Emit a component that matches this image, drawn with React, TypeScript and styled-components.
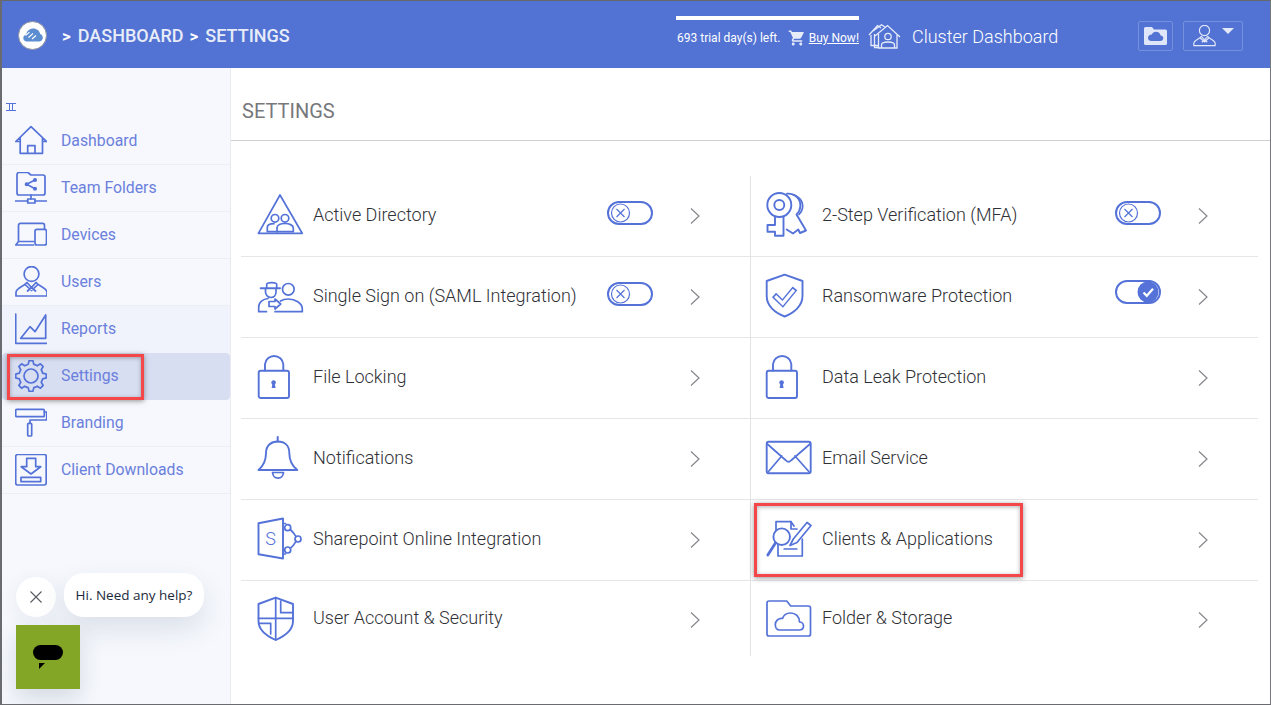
import React from 'react';
import styled, { createGlobalStyle } from 'styled-components';
import { MdShoppingCart } from 'react-icons/md';

const BLUE = '#5472d8';

const GlobalStyle = createGlobalStyle`
  html, body {
    margin: 0;
    padding: 0;
    background: #fff;
    overflow: hidden;
  }
  * { box-sizing: border-box; }
`;

const Page = styled.div`
  width: 1271px;
  height: 705px;
  display: flex;
  flex-direction: column;
  border-top: 1px solid #66676b;
  border-left: 2px solid #6a6b70;
  border-right: 1px solid #77787c;
  border-bottom: 1px solid #6a6b70;
  margin-bottom: 1px;
  font-family: Roboto, 'Liberation Sans', sans-serif;
  background: #fff;
  overflow: hidden;
`;

const Header = styled.header`
  height: 67px;
  flex: none;
  display: flex;
  align-items: center;
  background: #5273d3;
  color: #fff;
  padding-left: 16px;
`;

const LogoBadge = styled.div`
  width: 29px;
  height: 29px;
  border-radius: 50%;
  background: #fff;
  border: 1px solid #8a8f9c;
  display: flex;
  align-items: center;
  justify-content: center;
  margin-right: 15px;
  margin-top: 1px;
`;

const Crumbs = styled.div`
  display: flex;
  align-items: center;
  font-size: 18px;
  font-weight: 500;
  color: #e8ecf8;
  width: 614px;
  margin-top: 1px;
`;

const Crumb = styled.span`
  margin-right: 6px;
  b {
    font-weight: 700;
    font-size: 17px;
    color: #fff;
    margin-right: 7px;
  }
`;

const Trial = styled.div`
  width: 183px;
  height: 47px;
  align-self: flex-start;
  margin-top: 15px;
  border-top: 4px solid #fff;
  display: flex;
  align-items: center;
  justify-content: space-between;
  font-size: 12px;
  font-weight: 400;
  white-space: nowrap;
  padding-bottom: 7px;
  padding-left: 1px;
`;

const CartIcon = styled(MdShoppingCart)`
  width: 18px;
  height: 18px;
  color: #e6ebfa;
  margin-left: 7px;
  margin-right: 3px;
  flex: none;
`;

const BuyNow = styled.a`
  color: #fff;
  text-decoration: underline;
`;

const ClusterLink = styled.div`
  display: flex;
  align-items: center;
  margin-left: 9px;
  width: 270px;
  gap: 11px;
  font-size: 18px;
  font-weight: 300;
  color: #fff;
  margin-top: 3px;
`;

const HeaderButton = styled.button<{ $wide?: boolean }>`
  height: 30px;
  width: ${(p) => (p.$wide ? '60px' : '35px')};
  margin-right: 10px;
  margin-top: 2px;
  padding: 0;
  background: transparent;
  border: 1px solid rgba(255, 255, 255, 0.2);
  border-radius: 2px;
  display: flex;
  align-items: center;
  justify-content: center;
  gap: 6px;
`;

const Caret = styled.span`
  width: 0;
  height: 0;
  border-left: 6px solid transparent;
  border-right: 6px solid transparent;
  border-top: 6px solid #e4e9f9;
  margin-top: -9px;
`;

const Body = styled.div`
  flex: 1;
  display: flex;
  min-height: 0;
`;

const Sidebar = styled.aside`
  position: relative;
  width: 229px;
  flex: none;
  background: #f6f8fd;
  border-right: 1px solid #e9ebf1;
  padding-top: 35px;
`;

const CollapseIcon = styled.svg`
  display: block;
  margin-left: 4px;
  margin-bottom: 7px;
`;

const NavItem = styled.a<{ $state?: 'soft' | 'active' }>`
  position: relative;
  height: 47px;
  display: flex;
  align-items: center;
  padding-left: 13px;
  border-bottom: 1px solid ${(p) => (p.$state ? 'transparent' : '#eceef4')};
  border-radius: ${(p) => (p.$state === 'active' ? '4px' : '0')};
  background: ${(p) =>
    p.$state === 'active' ? '#d8def2' : p.$state === 'soft' ? '#f0f3fb' : 'transparent'};
  color: #6b7fdc;
  font-size: 15.8px;
  gap: 14px;
  svg { flex: none; }
`;

const NavText = styled.span`
  margin-bottom: 2px;
`;

const Callout = styled.span`
  position: absolute;
  border: 3px solid #f4474a;
  box-shadow: 0 1px 5px rgba(60, 60, 60, 0.55), inset 0 1px 4px rgba(60, 60, 60, 0.4);
  pointer-events: none;
`;

const SettingsCallout = styled(Callout)`
  left: 5px;
  top: 1px;
  width: 137px;
  height: 46px;
`;

const ClientsCallout = styled(Callout)`
  left: 3px;
  top: 3px;
  width: 269px;
  height: 74px;
`;

const ChatDock = styled.div`
  position: absolute;
  left: 14px;
  top: 505px;
  display: grid;
  grid-template-columns: 40px auto;
  column-gap: 8px;
  row-gap: 8px;
  align-items: end;
`;

const ChatClose = styled.div`
  width: 40px;
  height: 40px;
  border-radius: 50%;
  background: #fff;
  display: flex;
  align-items: center;
  justify-content: center;
  box-shadow: 0 4px 20px rgba(40, 60, 90, 0.08);
`;

const ChatBubble = styled.div`
  height: 44px;
  width: 140px;
  border-radius: 20px;
  background: #fff;
  display: flex;
  align-items: center;
  justify-content: center;
  font-family: 'Open Sans', sans-serif;
  font-size: 13.5px;
  color: #1b2a3b;
  white-space: nowrap;
  box-shadow: 0 12px 28px rgba(40, 60, 90, 0.13);
`;

const ChatButton = styled.div`
  width: 64px;
  height: 64px;
  background: #84a627;
  display: flex;
  align-items: center;
  justify-content: center;
  box-shadow: 0 10px 24px rgba(40, 60, 90, 0.16);
`;

const Main = styled.main`
  flex: 1;
  min-width: 0;
`;

const TitleBar = styled.div`
  height: 73px;
  display: flex;
  align-items: center;
  padding: 13px 0 0 11px;
  border-bottom: 1px solid #cfcfd2;
  font-size: 20px;
  color: #77787c;
`;

const Grid = styled.div`
  display: grid;
  grid-template-columns: 510px 507px;
  margin: 35px 0 0 10px;
`;

const Column = styled.div<{ $right?: boolean }>`
  border-right: ${(p) => (p.$right ? 'none' : '1px solid #e3e3e6')};
`;

const Row = styled.div<{ $right?: boolean; $last?: boolean }>`
  position: relative;
  height: ${(p) => (p.$last ? '75px' : '81px')};
  display: flex;
  align-items: center;
  padding: 0 50px ${(p) => (p.$last ? '0' : '2px')} ${(p) => (p.$right ? '15px' : '17px')};
  border-bottom: ${(p) => (p.$last ? 'none' : '1px solid #e6e6e8')};
`;

const IconSlot = styled.div<{ $right?: boolean }>`
  flex: none;
  width: ${(p) => (p.$right ? '56px' : '55px')};
  height: 44px;
  svg { display: block; overflow: visible; }
`;

const Label = styled.span`
  flex: 1;
  font-size: 18px;
  font-weight: 300;
  color: #2f3136;
  white-space: nowrap;
  margin-bottom: 2px;
`;

const Toggle = styled.span<{ $on?: boolean }>`
  flex: none;
  width: 46px;
  height: 24px;
  margin-right: 37px;
  border: 2px solid ${BLUE};
  border-radius: 12px;
  display: flex;
  align-items: center;
  justify-content: ${(p) => (p.$on ? 'flex-end' : 'flex-start')};
  transform: translateY(${(p) => (p.$on ? '-4px' : '-2px')});
  background: #fff;
  svg { flex: none; }
`;

const ChevronIcon = styled.svg`
  flex: none;
  transform: translateY(1px);
`;

const Stroke = styled.g`
  fill: none;
  stroke: ${BLUE};
  stroke-width: 1.7;
  stroke-linejoin: round;
  stroke-linecap: round;
`;

const Glyph = ({ w = 44, h = 44, children }: { w?: number; h?: number; children: React.ReactNode }) => (
  <svg width={w} height={h} viewBox={`0 0 ${w} ${h}`} fill="none">
    <Stroke>{children}</Stroke>
  </svg>
);

const gearPath = (cx: number, cy: number, outer: number, inner: number, teeth: number) => {
  let d = '';
  const step = (Math.PI * 2) / teeth;
  for (let i = 0; i < teeth; i++) {
    const a = i * step - Math.PI / 2;
    const pts = [
      [inner, a - step * 0.3],
      [outer, a - step * 0.16],
      [outer, a + step * 0.16],
      [inner, a + step * 0.3],
    ];
    pts.forEach(([r, t], j) => {
      const x = (cx + r * Math.cos(t)).toFixed(2);
      const y = (cy + r * Math.sin(t)).toFixed(2);
      if (i === 0 && j === 0) d += `M${x} ${y}`;
      else if (j === 0) d += `A${inner} ${inner} 0 0 1 ${x} ${y}`;
      else d += `L${x} ${y}`;
    });
  }
  return d + 'Z';
};

const HomeIcon = () => (
  <Glyph w={32} h={32}>
    <path d="M0.8 16.5L16 1.7L31.5 16.5M5.2 12.5V28.3H27.5V12.5M12.7 28.3V20.7H20V28.3M0.8 16.5H5M27.5 16.5H31.5" />
  </Glyph>
);

const TeamFolderIcon = () => (
  <Glyph w={32} h={32}>
    <path d="M2 2.5A2 2 0 0 1 4 0.5H13L16 3H28A2 2 0 0 1 30 5V21A2 2 0 0 1 28 23H4A2 2 0 0 1 2 21Z" />
    <path d="M20 8L11.7 12.3L20 16.7" strokeWidth={1.6} />
    <circle cx={20} cy={8} r={1.2} fill={BLUE} />
    <circle cx={11.7} cy={12.3} r={1.2} fill={BLUE} />
    <circle cx={20} cy={16.7} r={1.2} fill={BLUE} />
    <path d="M16 23V27M0.5 29H12.7M20 29H31.5" />
    <rect x={12.7} y={27} width={7.3} height={4} />
  </Glyph>
);

const DevicesIcon = () => (
  <Glyph w={32} h={32}>
    <path d="M3.5 22.5V6.3A2 2 0 0 1 5.5 4.3H27.5A2 2 0 0 1 29.5 6.3V10M3.5 22.5H18.5M3.5 22.5L0.8 26H18.5" />
    <rect x={20} y={10.3} width={11.5} height={15.7} rx={2} />
  </Glyph>
);

const UserShape = () => (
  <>
    <circle cx={16.5} cy={8} r={7.4} />
    <path d="M1 30V26.5C1 22 9 20.5 12 16.5L16.5 21.5L21 16.5C24 20.5 32 22 32 26.5V30Z" />
    <path d="M10 18.5L16.5 24.5L23 18.5M16.5 21.5L12.5 25M16.5 21.5L20.5 25" />
  </>
);

const UsersIcon = () => (
  <Glyph w={32} h={32}>
    <UserShape />
  </Glyph>
);

const ReportsIcon = () => (
  <Glyph w={32} h={32}>
    <path d="M0.7 1V30.3H31.7" />
    <path d="M5.7 25.3L15 13.7L20 18.7L30.7 2V25.3Z" />
  </Glyph>
);

const GearIcon = () => (
  <Glyph w={32} h={32}>
    <path d={gearPath(16, 16, 15.4, 12, 8)} />
    <circle cx={16} cy={16} r={7} />
  </Glyph>
);

const RollerIcon = () => (
  <Glyph w={32} h={32}>
    <rect x={0.7} y={2.3} width={28.6} height={7.4} rx={1} />
    <path d="M29.3 5H31.7V13H15V16.3" />
    <rect x={12.7} y={16.3} width={4} height={12.7} rx={1} />
  </Glyph>
);

const DownloadIcon = () => (
  <Glyph w={32} h={32}>
    <rect x={0.7} y={0.5} width={30.5} height={30.5} rx={2} />
    <path d="M11.7 4.3H20.7V12.7H25.7L16 20L6.2 12.7H11.7Z" />
    <rect x={6} y={23.3} width={19.7} height={4.4} />
  </Glyph>
);

const DirectoryIcon = () => (
  <Glyph>
    <path d="M22 2L44.2 40.3H0.4Z" />
    <circle cx={17} cy={25.3} r={3.8} />
    <circle cx={27} cy={25.3} r={3.8} />
    <path d="M19 38.7V35C19 32 23 30.5 27 30.5C31 30.5 35.3 32 35.3 35V38.7Z" />
    <path d="M9.3 38.7V34.5C9.3 32 12.5 30.7 16 30.7M9.3 38.7H19" />
  </Glyph>
);

const SsoIcon = () => (
  <Glyph>
    <path d="M2.7 14.3H22" strokeWidth={2} />
    <path d="M8.7 14V10.5C8.7 9 10 8.7 13.7 8.7C17.5 8.7 18.7 9 18.7 10.5V14" />
    <path d="M7.5 15V18C7.5 21 10 23.5 13 23.5C16 23.5 18 21 18 18V15" />
    <circle cx={30.3} cy={15.3} r={5.8} />
    <path d="M17 37.7H44.3V35C44.3 29 37 25 30.3 25C27 25 24.5 25.7 22.5 27" />
    <path d="M0.7 37.7V33C0.7 28 5 25 10 24.5M0.7 37.7H8.5" />
    <path d="M11 27.5H17V25L22.7 30L17 35V32.5H11Z" />
  </Glyph>
);

const LockIcon = () => (
  <Glyph w={32}>
    <rect x={0.7} y={15.7} width={30.3} height={27.3} rx={2} strokeWidth={1.9} />
    <path d="M7 15.5V9A9.2 9 0 0 1 25.3 9V15.5" strokeWidth={1.9} />
    <circle cx={15.6} cy={27.6} r={2.3} fill={BLUE} stroke="none" />
    <path d="M14.6 28L13.6 33H17.6L16.6 28Z" fill={BLUE} stroke="none" />
  </Glyph>
);

const BellIcon = () => (
  <Glyph>
    <path d="M0.5 34C7 28.5 8 22 8 17C8 9.5 13 5.5 19.7 5.5C26.5 5.5 31.3 9.5 31.3 17C31.3 22 32.3 28.5 39.3 34Z" strokeWidth={1.9} />
    <path d="M19.7 5.5V1" strokeWidth={2} />
    <path d="M14.5 36.5C15.5 44 24.5 44 25.5 36.5Z" />
  </Glyph>
);

const SharepointIcon = () => (
  <Glyph>
    <path d="M0.5 6.3L25 1.5V41.5L0.5 37.3Z" strokeWidth={1.9} />
    <text x={12.5} y={28} fontFamily="Roboto, sans-serif" fontSize={18} fontWeight={300} fill={BLUE} stroke="none" textAnchor="middle">
      S
    </text>
    <circle cx={29.7} cy={10.7} r={3} />
    <circle cx={40} cy={22} r={3} />
    <circle cx={29.7} cy={33} r={3} />
    <path d="M32.3 12.5C34.5 14.5 36.5 17 38 19.7M38 24.3C36.5 27 34.5 29.5 32.3 31.3M25 6.5H27.5M25 37H27.5" />
  </Glyph>
);

const SecurityShieldIcon = () => (
  <Glyph>
    <path d="M17.7 0.7L35 7V24C35 33 27 39 17.7 43C8.5 39 0.5 33 0.5 24V7Z" strokeWidth={1.9} />
    <path d="M17.7 0.7V43M0.5 21.3H35" />
    <path d="M22.7 4V15.7H35M1 26.3H12.7V37" />
  </Glyph>
);

const KeysIcon = () => (
  <Glyph>
    <circle cx={13.3} cy={12} r={12} strokeWidth={1.9} />
    <circle cx={13.3} cy={12} r={5} strokeWidth={1.9} />
    <path d="M9 23.5V32H1.5V38.7H9V42.7H17.5V23.5" strokeWidth={1.9} />
    <path d="M21 0.7C29 0.2 35 6 34.3 13.5C34 17 32.5 19.8 30.5 21.5L40 37.5L34 40L32.3 36.5L27 40.5L20.7 36.5" strokeWidth={1.9} />
    <path d="M26.5 1.5C33 3 37.5 8.5 36.5 15C36 18 34.5 20 33 21.5" />
  </Glyph>
);

const CheckShieldIcon = () => (
  <Glyph>
    <path d="M18.7 0.7L36.5 7V22C36.5 32 28 39 18.7 42.5C9 39 0.7 32 0.7 22V7Z" strokeWidth={1.9} />
    <path d="M8 21L16.7 29.3L29 14.3" strokeWidth={6} strokeLinejoin="miter" strokeLinecap="butt" />
    <path d="M9.2 22.2L16.7 29.3L27.9 15.7" strokeWidth={3.2} stroke="#fff" strokeLinejoin="miter" strokeLinecap="butt" />
  </Glyph>
);

const MailIcon = () => (
  <Glyph>
    <rect x={0.7} y={5.7} width={44} height={31.6} rx={2} strokeWidth={1.9} />
    <path d="M1.3 8L20 24.5C21.5 26 23.5 26 25 24.5L44 8M2.3 35.7L15.7 20M43 35.7L29 20" />
  </Glyph>
);

const ClientsIcon = () => (
  <Glyph w={46}>
    <path d="M10 13V4.7H25L28 9M12 28V39H36.3V22" />
    <path d="M25 4.7V12H31" />
    <circle cx={15.7} cy={19.7} r={8.3} strokeWidth={1.9} />
    <path d="M9.5 26L1.8 38" strokeWidth={2.8} />
    <path d="M24 28.5L27.3 22L41 5.5L45 8.5L31 25.5Z" />
    <path d="M18 32H31" strokeWidth={1.4} />
  </Glyph>
);

const FolderCloudIcon = () => (
  <Glyph w={46}>
    <path d="M1 6A2 2 0 0 1 3 4H20.7L24.7 9H42.5A2 2 0 0 1 44.5 11V37A2 2 0 0 1 42.5 39H3A2 2 0 0 1 1 37Z" />
    <path d="M13.5 33H33C36 33 37.5 31 37.5 29C37.5 26.5 35.5 25 33.5 25C33.5 19.5 29.5 16 24.5 16C20.5 16 17.5 18.5 16.5 21.5C12.5 21 9.3 24 9.3 27.5C9.3 30.5 11 33 13.5 33Z" />
  </Glyph>
);

const KnobOff = () => (
  <svg width={24} height={24} viewBox="0 0 24 24" fill="none" stroke={BLUE} strokeWidth={1.2} style={{ marginLeft: -0.5 }}>
    <circle cx={11.5} cy={12} r={9} />
    <path d="M7.5 8L15.5 16M15.5 8L7.5 16" />
  </svg>
);

const KnobOn = () => (
  <svg width={24} height={24} viewBox="0 0 24 24" fill="none" style={{ marginRight: -1 }}>
    <circle cx={12} cy={12} r={10.5} fill={BLUE} />
    <path d="M7.5 12.5L10.8 15.8L17 8.8" stroke="#fff" strokeWidth={2.2} />
  </svg>
);

const Chevron = () => (
  <ChevronIcon width={10} height={18} viewBox="0 0 10 18" fill="none" stroke="#85868c" strokeWidth={1.2}>
    <path d="M1 1.5L9 9L1 16.5" />
  </ChevronIcon>
);

type Setting = {
  label: string;
  icon: React.ReactNode;
  toggle?: 'on' | 'off';
  callout?: boolean;
};

const leftSettings: Setting[] = [
  { label: 'Active Directory', icon: <DirectoryIcon />, toggle: 'off' },
  { label: 'Single Sign on (SAML Integration)', icon: <SsoIcon />, toggle: 'off' },
  { label: 'File Locking', icon: <LockIcon /> },
  { label: 'Notifications', icon: <BellIcon /> },
  { label: 'Sharepoint Online Integration', icon: <SharepointIcon /> },
  { label: 'User Account & Security', icon: <SecurityShieldIcon /> },
];

const rightSettings: Setting[] = [
  { label: '2-Step Verification (MFA)', icon: <KeysIcon />, toggle: 'off' },
  { label: 'Ransomware Protection', icon: <CheckShieldIcon />, toggle: 'on' },
  { label: 'Data Leak Protection', icon: <LockIcon /> },
  { label: 'Email Service', icon: <MailIcon /> },
  { label: 'Clients & Applications', icon: <ClientsIcon />, callout: true },
  { label: 'Folder & Storage', icon: <FolderCloudIcon /> },
];

const navItems: { label: string; icon: React.ReactNode; state?: 'soft' | 'active' }[] = [
  { label: 'Dashboard', icon: <HomeIcon /> },
  { label: 'Team Folders', icon: <TeamFolderIcon /> },
  { label: 'Devices', icon: <DevicesIcon /> },
  { label: 'Users', icon: <UsersIcon /> },
  { label: 'Reports', icon: <ReportsIcon />, state: 'soft' },
  { label: 'Settings', icon: <GearIcon />, state: 'active' },
  { label: 'Branding', icon: <RollerIcon /> },
  { label: 'Client Downloads', icon: <DownloadIcon /> },
];

const SettingsColumn = ({ items, right }: { items: Setting[]; right?: boolean }) => (
  <Column $right={right}>
    {items.map((item, i) => (
      <Row key={item.label} $right={right} $last={i === items.length - 1}>
        <IconSlot $right={right}>{item.icon}</IconSlot>
        <Label>{item.label}</Label>
        {item.toggle && <Toggle $on={item.toggle === 'on'}>{item.toggle === 'on' ? <KnobOn /> : <KnobOff />}</Toggle>}
        <Chevron />
        {item.callout && <ClientsCallout />}
      </Row>
    ))}
  </Column>
);

const App = () => {
  return (
    <Page>
      <GlobalStyle />
      <Header>
        <LogoBadge>
          <svg width={20} height={14} viewBox="0 0 20 14">
            <path d="M4 13.5C1.8 13.5 0.3 12 0.3 10C0.3 8.2 1.5 6.8 3.2 6.5C3.8 3 6.7 0.5 10.3 0.5C13.8 0.5 16.5 2.8 17.2 6C18.8 6.6 19.8 8 19.8 9.8C19.8 12 18 13.5 16 13.5Z" fill="#5b8dd0" />
            <path d="M2.5 7.5L6.5 4.2M5.5 9.5L10 5.5M9 11L13 7.5" stroke="#fff" strokeWidth={1.1} />
          </svg>
        </LogoBadge>
        <Crumbs>
          <Crumb><b>&gt;</b>DASHBOARD</Crumb>
          <Crumb><b>&gt;</b>SETTINGS</Crumb>
        </Crumbs>
        <Trial>
          <span>693 trial day(s) left.</span>
          <CartIcon />
          <BuyNow>Buy Now!</BuyNow>
        </Trial>
        <ClusterLink>
          <svg width={33} height={25} viewBox="0 0 33 25" fill="none" stroke="#e6ebfa" strokeWidth={1.3}>
            <path d="M1 11L9.5 1.5L13 4M5 7L13.5 0.8L17 3M7 12L19.5 1.5L32 13M10.5 10V24H29V10" />
            <path d="M3 11V21.5H10.5M6.5 10V23.5H10.5" />
            <circle cx={20} cy={12.5} r={3.2} />
            <path d="M13.5 24V21C13.5 18.7 17 18 20 18C23 18 26.5 18.7 26.5 21V24" />
          </svg>
          Cluster Dashboard
        </ClusterLink>
        <HeaderButton>
          <svg width={23} height={18} viewBox="0 0 23 18">
            <path d="M0 1.5A1.5 1.5 0 0 1 1.5 0H8L10 2.5H21.5A1.5 1.5 0 0 1 23 4V16.5A1.5 1.5 0 0 1 21.5 18H1.5A1.5 1.5 0 0 1 0 16.5Z" fill="#e0e6f9" />
            <path d="M7.5 14H16C18 14 19.3 12.8 19.3 11.2C19.3 9.6 18 8.5 16.6 8.5C16.3 6.2 14.3 4.8 12 4.8C10 4.8 8.4 6 7.8 7.6C5.5 7.6 4 9.2 4 11C4 12.8 5.5 14 7.5 14Z" fill="#5273d3" />
          </svg>
        </HeaderButton>
        <HeaderButton $wide>
          <svg width={23} height={22} viewBox="0 0 33 32" fill="none" stroke="#e4e9f9" strokeWidth={1.7}>
            <UserShape />
          </svg>
          <Caret />
        </HeaderButton>
      </Header>
      <Body>
        <Sidebar>
          <CollapseIcon width={10} height={8} viewBox="0 0 10 8" fill="none" stroke={BLUE} strokeWidth={1}>
            <path d="M0 0.5H10M0 7.5H10M3.5 0.5V7.5M6.5 0.5V7.5" />
          </CollapseIcon>
          <nav>
            {navItems.map((item) => (
              <NavItem key={item.label} $state={item.state}>
                {item.icon}
                <NavText>{item.label}</NavText>
                {item.state === 'active' && <SettingsCallout />}
              </NavItem>
            ))}
          </nav>
          <ChatDock>
            <ChatClose>
              <svg width={12} height={12} viewBox="0 0 12 12" stroke="#555a62" strokeWidth={1.1}>
                <path d="M0.5 0.5L11.5 11.5M11.5 0.5L0.5 11.5" />
              </svg>
            </ChatClose>
            <ChatBubble>Hi. Need any help?</ChatBubble>
            <ChatButton>
              <svg width={30} height={24} viewBox="0 0 30 24">
                <rect x={0} y={0} width={30} height={15} rx={7.5} fill="#000" />
                <path d="M6 18H12L6 24Z" fill="#000" />
              </svg>
            </ChatButton>
          </ChatDock>
        </Sidebar>
        <Main>
          <TitleBar>SETTINGS</TitleBar>
          <Grid>
            <SettingsColumn items={leftSettings} />
            <SettingsColumn items={rightSettings} right />
          </Grid>
        </Main>
      </Body>
    </Page>
  );
};

export default App;
